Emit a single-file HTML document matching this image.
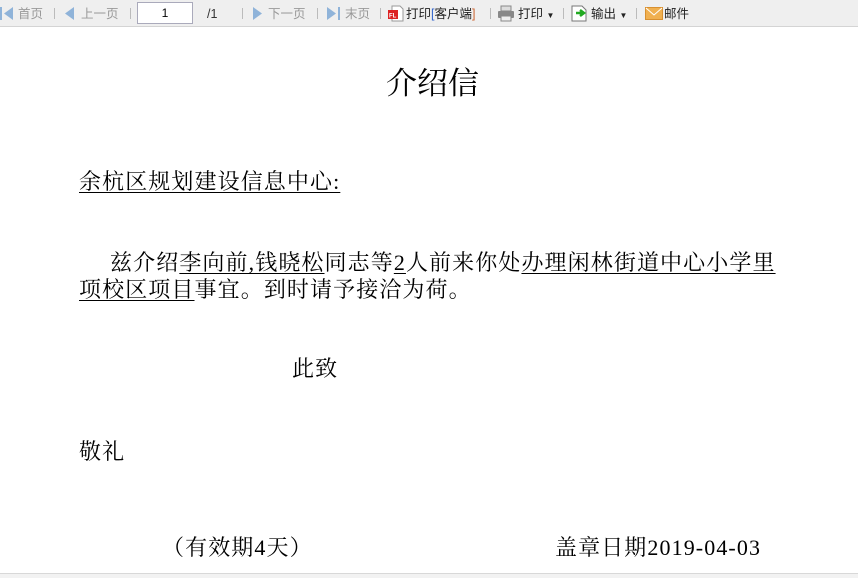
<!DOCTYPE html>
<html><head><meta charset="utf-8"><style>
html,body{margin:0;padding:0;width:858px;height:577px;overflow:hidden;background:#fff;}
.tb{position:absolute;left:0;top:0;width:858px;height:26px;background:#efefef;border-bottom:1px solid #d4d4d4;font:12.5px/16px "Liberation Sans","Noto Sans CJK SC",sans-serif;color:#999;}
.tb span{position:absolute;top:6px;white-space:nowrap;line-height:16px;}
.sep{position:absolute;top:8px;width:1px;height:11px;background:#bbb;}
.dk{color:#222;}
.t{position:absolute;white-space:nowrap;font-family:"Liberation Serif","Noto Serif CJK SC",serif;font-size:22px;color:#000;line-height:27px;letter-spacing:1.1px;}
u{text-decoration:underline;text-underline-offset:3px;text-decoration-thickness:1px;}
.bl{position:absolute;left:0;top:573px;width:858px;height:4px;background:#f2f2f2;border-top:1px solid #d8d8d8;}
</style></head><body>
<div class="tb">
<svg style="position:absolute;left:0;top:7px" width="14" height="13"><rect x="0" y="0" width="2" height="13" fill="#8fb3d9"/><polygon points="13,0 13,13 4,6.5" fill="#8fb3d9"/></svg>
<span style="left:18px">首页</span><div class="sep" style="left:54px"></div>
<svg style="position:absolute;left:65px;top:7px" width="10" height="13"><polygon points="9,0 9,13 0,6.5" fill="#8fb3d9"/></svg>
<span style="left:81px">上一页</span><div class="sep" style="left:130px"></div>
<div style="position:absolute;left:137px;top:2px;width:54px;height:20px;background:#fff;border:1px solid #aab;font:12px 'Liberation Sans';color:#000;text-align:center;line-height:20px">1</div>
<span style="left:207px;color:#333">/1</span><div class="sep" style="left:242px"></div>
<svg style="position:absolute;left:253px;top:7px" width="10" height="13"><polygon points="0,0 0,13 9,6.5" fill="#8fb3d9"/></svg>
<span style="left:268px">下一页</span><div class="sep" style="left:317px"></div>
<svg style="position:absolute;left:327px;top:7px" width="14" height="13"><polygon points="0,0 0,13 9,6.5" fill="#8fb3d9"/><rect x="11" y="0" width="2" height="13" fill="#8fb3d9"/></svg>
<span style="left:345px">末页</span><div class="sep" style="left:380px"></div>
<svg style="position:absolute;left:387px;top:5px" width="17" height="17"><path d="M5 1h8l3 3v12H5z" fill="#fff" stroke="#999"/><rect x="1" y="5" width="10" height="9" fill="#d22"/><text x="2" y="12.5" font-size="6" fill="#fff" font-family="Liberation Sans" font-weight="bold">FL</text></svg>
<span class="dk" style="left:406px">打印<b style="font-weight:normal;color:#36c">[</b>客户端<b style="font-weight:normal;color:#c63">]</b></span><div class="sep" style="left:490px"></div>
<svg style="position:absolute;left:497px;top:5px" width="18" height="17"><rect x="4" y="1" width="10" height="5" fill="#ddd" stroke="#888"/><rect x="1" y="6" width="16" height="7" rx="1" fill="#888"/><rect x="4" y="11" width="10" height="5" fill="#eee" stroke="#888"/></svg>
<span class="dk" style="left:518px">打印 <b style="font-size:8px">▼</b></span><div class="sep" style="left:563px"></div>
<svg style="position:absolute;left:571px;top:4px" width="17" height="18"><path d="M1 2h10l4 4v11H1z" fill="#fff" stroke="#777"/><path d="M5 9h6M9 6l4 3-4 3" stroke="#2a2" stroke-width="2.5" fill="none"/></svg>
<span class="dk" style="left:591px">输出 <b style="font-size:8px">▼</b></span><div class="sep" style="left:636px"></div>
<svg style="position:absolute;left:645px;top:7px" width="18" height="13"><rect x="0.5" y="0.5" width="17" height="12" fill="#f0b050" stroke="#d89030"/><path d="M1 1l8 7 8-7" stroke="#fff" fill="none"/></svg>
<span class="dk" style="left:664px">邮件</span>
</div>
<div class="t" style="left:386px;top:66px;font-size:31px;line-height:36px;letter-spacing:0">介绍信</div>
<div class="t" style="left:79px;top:168px"><u>余杭区规划建设信息中心:</u></div>
<div class="t" style="left:110px;top:249px">兹介绍<u>李向前,钱晓松</u>同志等<u>2</u>人前来你处<u>办理闲林街道中心小学里</u></div>
<div class="t" style="left:79px;top:276px"><u>项校区项目</u>事宜。到时请予接洽为荷。</div>
<div class="t" style="left:292px;top:355px">此致</div>
<div class="t" style="left:79px;top:438px">敬礼</div>
<div class="t" style="left:162px;top:534px">（有效期4天）</div>
<div class="t" style="left:555px;top:534px">盖章日期2019-04-03</div>
<div class="bl"></div>
</body></html>
